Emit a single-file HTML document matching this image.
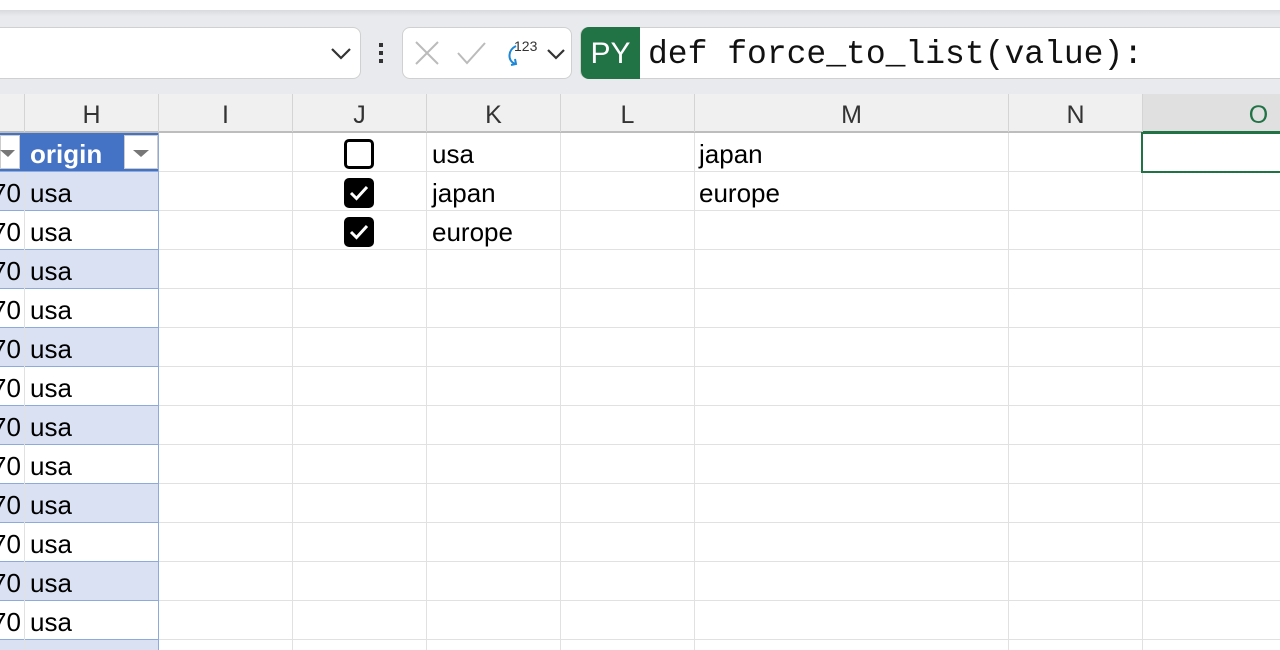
<!DOCTYPE html>
<html><head><meta charset="utf-8"><style>
*{margin:0;padding:0;box-sizing:border-box}
body{width:1280px;height:650px;overflow:hidden;position:relative;background:#fff;font-family:"Liberation Sans",sans-serif}
.a{position:absolute}
.t{position:absolute;font-size:26px;color:#000;line-height:42px;height:38px}
.hd{position:absolute;top:94px;height:38px;line-height:42px;text-align:center;font-size:25px;color:#333;border-right:1px solid #d4d4d4}
.cb{position:absolute;left:344px;width:30px;height:30px;border-radius:5px}
</style></head><body>
<div class="a" style="left:0;top:0;width:1280px;height:10px;background:#fff"></div>
<div class="a" style="left:0;top:10px;width:1280px;height:84px;background:linear-gradient(#d8dadd 0,#e8eaed 6px,#e8eaed 100%)"></div>
<div class="a" style="left:-10px;top:27px;width:371px;height:52px;background:#fff;border:1px solid #d0d0d0;border-radius:8px"></div>
<svg class="a" style="left:330px;top:44px" width="22" height="18"><path d="M2 5 L11 14 L20 5" fill="none" stroke="#333" stroke-width="2.2"/></svg>
<div class="a" style="left:379px;top:43px;width:4px;height:4px;background:#333"></div>
<div class="a" style="left:379px;top:51px;width:4px;height:4px;background:#333"></div>
<div class="a" style="left:379px;top:59px;width:4px;height:4px;background:#333"></div>
<div class="a" style="left:402px;top:27px;width:170px;height:52px;background:#fff;border:1px solid #d0d0d0;border-radius:8px"></div>
<svg class="a" style="left:412px;top:38px" width="160" height="32"><path d="M4 4 L26 26 M26 4 L4 26" stroke="#bbb" stroke-width="2"/><path d="M46 15 L55 25 L73 5" fill="none" stroke="#bbb" stroke-width="2"/><path d="M104 8 C96 12 95 22 103 26 M99 27 L104 26 L103 21" fill="none" stroke="#1e88d6" stroke-width="2"/><text x="102" y="13" font-size="14" font-family="Liberation Sans" fill="#333">123</text><path d="M136 12 L144 20 L152 12" fill="none" stroke="#333" stroke-width="2.2"/></svg>
<div class="a" style="left:580px;top:27px;width:720px;height:52px;background:#fff;border:1px solid #d0d0d0;border-radius:8px"></div>
<div class="a" style="left:581px;top:27px;width:59px;height:52px;background:#217346;border-radius:8px 0 0 8px;color:#fff;font-size:30px;line-height:54px;text-align:center">PY</div>
<div class="a" style="left:648px;top:27px;height:52px;line-height:56px;font-family:'Liberation Mono',monospace;font-size:33px;color:#111">def force_to_list(value):</div>
<div class="a" style="left:0;top:94px;width:1280px;height:39px;background:#f0f0f0;border-bottom:2px solid #bdbdbd"></div>
<div class="hd" style="left:0;width:25px"></div>
<div class="hd" style="left:25px;width:134px">H</div>
<div class="hd" style="left:159px;width:134px">I</div>
<div class="hd" style="left:293px;width:134px">J</div>
<div class="hd" style="left:427px;width:134px">K</div>
<div class="hd" style="left:561px;width:134px">L</div>
<div class="hd" style="left:695px;width:314px">M</div>
<div class="hd" style="left:1009px;width:134px">N</div>
<div class="hd" style="left:1143px;width:232px;background:#e0e0e0;color:#217346;border-bottom:2px solid #217346;height:39px">O</div>
<div class="a" style="left:0;top:133px;width:1280px;height:517px;background-image:repeating-linear-gradient(to bottom,transparent 0,transparent 38px,#e1e1e1 38px,#e1e1e1 39px)"></div>
<div class="a" style="left:292px;top:133px;width:1px;height:517px;background:#e1e1e1"></div>
<div class="a" style="left:426px;top:133px;width:1px;height:517px;background:#e1e1e1"></div>
<div class="a" style="left:560px;top:133px;width:1px;height:517px;background:#e1e1e1"></div>
<div class="a" style="left:694px;top:133px;width:1px;height:517px;background:#e1e1e1"></div>
<div class="a" style="left:1008px;top:133px;width:1px;height:517px;background:#e1e1e1"></div>
<div class="a" style="left:1142px;top:133px;width:1px;height:517px;background:#e1e1e1"></div>
<div class="a" style="left:0;top:133px;width:159px;height:38px;background:#4472c4"></div>
<div class="a" style="left:0;top:171px;width:159px;height:479px;background-image:repeating-linear-gradient(to bottom,#8eaadb 0,#8eaadb 1px,#d9e1f2 1px,#d9e1f2 39px,#8eaadb 39px,#8eaadb 40px,#fff 40px,#fff 78px)"></div>
<div class="a" style="left:24px;top:172px;width:1px;height:478px;background:#e1e1e1"></div>
<div class="a" style="left:158px;top:133px;width:1px;height:517px;background:#8eaadb"></div>
<div class="a" style="left:0;top:135px;width:20px;height:34px;background:#fff;border:1px solid #ccc"></div>
<svg class="a" style="left:0;top:147px" width="18" height="12"><path d="M0 3 L15 3 L8 10Z" fill="#777"/></svg>
<div class="a" style="left:124px;top:135px;width:34px;height:34px;background:#fff;border:1px solid #ccc"></div>
<svg class="a" style="left:132px;top:147px" width="18" height="12"><path d="M1 3 L17 3 L9 10Z" fill="#777"/></svg>
<div class="t" style="left:30px;top:133px;color:#fff;font-weight:bold">origin</div>
<div class="t" style="left:-8px;top:172px">70</div><div class="t" style="left:30px;top:172px">usa</div>
<div class="t" style="left:-8px;top:211px">70</div><div class="t" style="left:30px;top:211px">usa</div>
<div class="t" style="left:-8px;top:250px">70</div><div class="t" style="left:30px;top:250px">usa</div>
<div class="t" style="left:-8px;top:289px">70</div><div class="t" style="left:30px;top:289px">usa</div>
<div class="t" style="left:-8px;top:328px">70</div><div class="t" style="left:30px;top:328px">usa</div>
<div class="t" style="left:-8px;top:367px">70</div><div class="t" style="left:30px;top:367px">usa</div>
<div class="t" style="left:-8px;top:406px">70</div><div class="t" style="left:30px;top:406px">usa</div>
<div class="t" style="left:-8px;top:445px">70</div><div class="t" style="left:30px;top:445px">usa</div>
<div class="t" style="left:-8px;top:484px">70</div><div class="t" style="left:30px;top:484px">usa</div>
<div class="t" style="left:-8px;top:523px">70</div><div class="t" style="left:30px;top:523px">usa</div>
<div class="t" style="left:-8px;top:562px">70</div><div class="t" style="left:30px;top:562px">usa</div>
<div class="t" style="left:-8px;top:601px">70</div><div class="t" style="left:30px;top:601px">usa</div>
<div class="cb" style="top:139px;border:3px solid #000;background:#fff"></div>
<div class="cb" style="top:178px;background:#000"><svg width="30" height="30"><path d="M7 15 L12.5 20.5 L23 9" fill="none" stroke="#fff" stroke-width="3"/></svg></div>
<div class="cb" style="top:217px;background:#000"><svg width="30" height="30"><path d="M7 15 L12.5 20.5 L23 9" fill="none" stroke="#fff" stroke-width="3"/></svg></div>
<div class="t" style="left:432px;top:133px">usa</div>
<div class="t" style="left:432px;top:172px">japan</div>
<div class="t" style="left:432px;top:211px">europe</div>
<div class="t" style="left:699px;top:133px">japan</div>
<div class="t" style="left:699px;top:172px">europe</div>
<div class="a" style="left:1141px;top:132px;width:145px;height:41px;border:2px solid #217346"></div>
</body></html>
